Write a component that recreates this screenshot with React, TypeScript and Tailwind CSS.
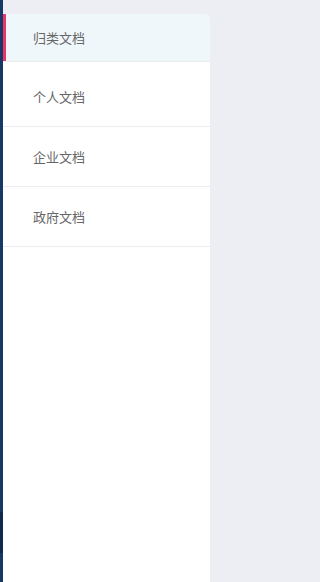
const items = ['归类文档', '个人文档', '企业文档', '政府文档']

export default function App() {
  return (
    <div className="flex h-[582px] w-full overflow-hidden bg-[#edeef3] font-['Noto_Sans_CJK_SC',sans-serif]">
      {/* left nav edge */}
      <div className="flex w-[3px] shrink-0 flex-col bg-[#173767]">
        <div className="h-[512px]" />
        <div className="h-[41px] bg-[#10284e]" />
      </div>

      <div className="mt-[14px] flex w-[207px] shrink-0 flex-col rounded-tr-[6px] bg-white">
        <div className="relative flex h-[48px] items-center rounded-tr-[6px] border-b border-[#ebecf0] bg-[#eff7fa] pl-[30px] text-[13px] text-[#666]">
          <span className="absolute left-0 top-0 h-[47px] w-[3px] bg-[#e9356b]" />
          {items[0]}
        </div>
        <div className="flex h-[65px] items-center border-b border-[#ebecf0] pl-[30px] pt-[6px] text-[13px] text-[#666]">
          {items[1]}
        </div>
        {items.slice(2).map(t => (
          <div key={t} className="flex h-[60px] items-center border-b border-[#ebecf0] pl-[30px] text-[13px] text-[#666]">
            {t}
          </div>
        ))}
      </div>
    </div>
  )
}
